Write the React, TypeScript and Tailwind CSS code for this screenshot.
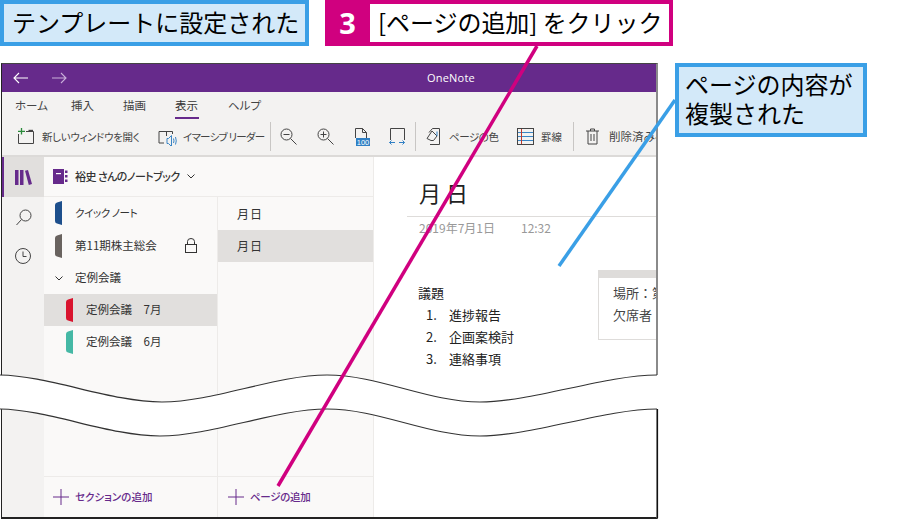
import React from "react";

const font = { fontFamily: '"Noto Sans CJK JP", "Noto Sans", sans-serif' };

function Tab({ color }: { color: string }) {
  return (
    <svg width="8" height="24" viewBox="0 0 8 24" className="shrink-0">
      <path d="M7 0 V24 L2 22.5 Q0 22 0 20 V4 Q0 2 2 1.5 Z" fill={color} />
    </svg>
  );
}

function Stroke({ w, h, children, className }: { w: number; h: number; children: React.ReactNode; className?: string }) {
  return (
    <svg width={w} height={h} viewBox={`0 0 ${w} ${h}`} fill="none" stroke="#444" strokeWidth="1" className={"shrink-0 " + (className || "")}>
      {children}
    </svg>
  );
}

function Divider({ cls }: { cls: string }) {
  return <div className={"w-px h-[29px] bg-[#c8c6c4] shrink-0 " + cls} />;
}

function Section({ color, label, selected, extra }: { color: string; label: string; selected?: boolean; extra?: React.ReactNode }) {
  return (
    <div className={"h-[32px] flex items-center pl-[22px] " + (selected ? "bg-[#e1dfdd]" : "")}>
      <Tab color={color} />
      <span className="ml-[12px] text-[11.5px] text-[#333]">{label}</span>
      {extra}
    </div>
  );
}

export default function App() {
  return (
    <div className="relative w-[902px] h-[520px] bg-white overflow-hidden" style={font}>
      {/* callouts */}
      <div className="flex h-[46px] items-stretch">
        <div className="w-[309px] border-[4px] border-[#3a9fe6] bg-[#d3e9f9] flex items-center pl-[8px] pb-[3px] text-[24px] text-black whitespace-nowrap">
          テンプレートに設定された
        </div>
        <div className="ml-[16px] w-[348px] bg-[#d0007f] flex items-stretch pt-[4px] pb-[4px] pr-[4px]">
          <div className="w-[45px] flex items-center justify-center text-white font-bold text-[29px]" style={{ fontFamily: '"Noto Sans", sans-serif' }}>3</div>
          <div className="flex-1 bg-white flex items-center pl-[8px] pb-[3px] text-[24px] text-black whitespace-nowrap tracking-[-0.05px]">
            [ページの追加] をクリック
          </div>
        </div>
      </div>

      {/* window */}
      <div className="mt-[17px] ml-px w-[657px] h-[456px] border-l border-t border-l-[#222] border-t-[#444] border-r-2 border-r-[#8a8a8a] border-b-2 border-b-[#222] flex flex-col overflow-hidden">
        <div className="h-[28px] shrink-0 bg-[#662a8b] flex items-center text-white">
          <svg width="15" height="12" viewBox="0 0 15 12" fill="none" stroke="#fff" strokeWidth="1.1" className="ml-[11px]"><path d="M15 6H1M6 1 1 6l5 5" /></svg>
          <svg width="15" height="12" viewBox="0 0 15 12" fill="none" stroke="#c9afd9" strokeWidth="1.1" className="ml-[24px]"><path d="M0 6h14M9 1l5 5-5 5" /></svg>
          <span className="ml-[360px] text-[11px] tracking-[0.2px]" style={{ fontFamily: '"Open Sans", sans-serif' }}>OneNote</span>
        </div>
        <div className="h-[65px] shrink-0 bg-[#f3f2f1] border-b-2 border-[#dcdad8] text-[#444] flex flex-col">
          <div className="h-[28px] flex text-[11.5px] pl-[13px] pt-[5px] [font-feature-settings:'palt']">
            <span className="w-[56px]">ホーム</span>
            <span className="w-[52px]">挿入</span>
            <span className="w-[52px]">描画</span>
            <span className="w-[53px] h-[22px] relative text-[#333]">
              表示
              <span className="absolute left-0 top-[20px] w-[24px] h-[2px] bg-[#662a8b]" />
            </span>
            <span>ヘルプ</span>
          </div>
          <div className="flex items-center h-[33px] pl-[15px] text-[10.5px] whitespace-nowrap [font-feature-settings:'palt']">
            <Stroke w={17} h={16} className="mt-[-1px]">
              <path d="M9 3.5H16.500V15.500H1.500V6" />
              <path d="M11.500 2.500H16" strokeWidth="1.400" />
              <path d="M4.500 0V6.500M1 3.300H8" stroke="#2a8a3a" strokeWidth="1.300" />
            </Stroke>
            <span className="ml-[8px] w-[98px] shrink-0 tracking-[-0.35px]">新しいウィンドウを開く</span>
            <Stroke w={19} h={18} className="ml-[18px]">
              <path d="M8 3.500H1V15H6" />
              <path d="M8.500 3.500H14.500V6" />
              <path d="M8.500 3V8" />
              <path d="M9 10.500h1.500l3-3v11l-3-3H9z" stroke="#3a85c5" />
              <path d="M15.500 10.500q1 2.500 0 4.500M17.500 9q1.500 4 0 7.500" stroke="#3a85c5" />
            </Stroke>
            <span className="ml-[6px] w-[78px] shrink-0 tracking-[-0.75px]">イマーシブ リーダー</span>
            <Divider cls="ml-[9px]" />
            <Stroke w={18} h={18} className="ml-[9px]">
              <circle cx="6.500" cy="6.500" r="5.500" /><path d="M10.500 10.500l6 6M3.500 6.500h6" />
            </Stroke>
            <Stroke w={18} h={18} className="ml-[19px]">
              <circle cx="6.500" cy="6.500" r="5.500" /><path d="M10.500 10.500l6 6M3.500 6.500h6M6.500 3.500v6" />
            </Stroke>
            <Stroke w={16} h={18} className="ml-[19px]">
              <path d="M1.500 10V0.500H8.500L12.500 4.500V10M8.500 0.500V4.500H12.500" />
              <rect x="2" y="10" width="14" height="8" fill="#2f7fc4" stroke="none" />
              <text x="9" y="16.500" fontSize="7.500" fill="#fff" stroke="none" textAnchor="middle" fontFamily="Liberation Sans">100</text>
            </Stroke>
            <Stroke w={17} h={18} className="ml-[19px]">
              <path d="M1.500 12V0.500H15.500V12" />
              <path d="M0.500 14.500H6M10 14.500H15.500M2.500 12.500l-2 2 2 2M13.500 12.500l2 2-2 2" stroke="#2f7fc4" />
            </Stroke>
            <Divider cls="ml-[9px]" />
            <Stroke w={16} h={18} className="ml-[10px]">
              <path d="M3 4.500L6.500 0.500H13.500V16.500H4" />
              <path d="M1 10.500L6 3l5 5-3.500 4.500H5z" />
              <path d="M11 3.500V8" stroke="#2f7fc4" />
            </Stroke>
            <span className="ml-[7px] w-[50px] shrink-0 tracking-[-0.45px]">ページの色</span>
            <Stroke w={17} h={17} className="ml-[18px]">
              <rect x="0.500" y="0.500" width="16" height="16" />
              <path d="M1 4.500H16M1 8.500H16M1 12.500H16" stroke="#3a85c5" />
              <path d="M4.500 1V16" stroke="#c0392b" />
            </Stroke>
            <span className="ml-[7px] w-[25px] shrink-0">罫線</span>
            <Divider cls="ml-[7px]" />
            <Stroke w={13} h={17} className="ml-[12px]">
              <path d="M0 3H13M2 3V16H11V3M4.500 3V1H8.500V3M5 6V13M8 6V13" />
            </Stroke>
            <span className="ml-[10px] shrink-0 text-[11.500px]">削除済みページ</span>
          </div>
        </div>

        <div className="flex-1 flex min-h-0 bg-white">
          {/* rail */}
          <div className="w-[42px] shrink-0 bg-[#f3f2f1] flex flex-col items-center">
            <div className="w-full h-[40px] bg-[#e1dfdd] border-l-2 border-[#662a8b] flex items-center justify-center pr-[2px]">
              <svg width="17" height="15" viewBox="0 0 17 15" fill="#662a8b">
                <rect x="0" y="0" width="3.500" height="15" /><rect x="5" y="0" width="3.500" height="15" />
                <path d="M10 0.800 13 0 17 14 13.800 15z" />
              </svg>
            </div>
            <Stroke w={16} h={17} className="mt-[12px] ml-[1px]">
              <circle cx="9.500" cy="6.500" r="5.500" /><path d="M5.500 10.500 0.500 16" />
            </Stroke>
            <svg width="16" height="16" viewBox="0 0 16 16" fill="none" stroke="#444" className="mt-[22px]">
              <circle cx="8" cy="8" r="7.500" /><path d="M8 3.500V8.500H11.500" />
            </svg>
          </div>

          {/* sections + pages */}
          <div className="w-[330px] shrink-0 bg-[#faf9f8] border-r border-[#edebe9] flex flex-col text-[#333]">
            <div className="h-[40px] shrink-0 border-b border-[#edebe9] flex items-center pl-[9px]">
              <svg width="15" height="15" viewBox="0 0 15 15" className="shrink-0">
                <rect width="11" height="15" fill="#662a8b" />
                <rect x="3" y="4" width="5" height="1.200" fill="#fff" />
                <rect x="12" y="1.500" width="2.500" height="2.500" fill="#662a8b" />
                <rect x="12" y="6" width="2.500" height="2.500" fill="#662a8b" />
                <rect x="12" y="10.500" width="2.500" height="2.500" fill="#662a8b" />
              </svg>
              <span className="ml-[7px] text-[11px] font-medium tracking-[-0.55px] [font-feature-settings:'palt']">裕史 さんのノートブック</span>
              <svg width="8" height="5" viewBox="0 0 8 5" fill="none" stroke="#333" className="ml-[7px]"><path d="M0.500 0.500 4 4 7.500 0.500" /></svg>
            </div>
            <div className="flex-1 flex min-h-0">
              <div className="w-[174px] border-r border-[#edebe9] flex flex-col">
                <div className="flex-1 text-[11.500px]">
                  <div className="h-[32px] flex items-center pl-[11px]">
                    <Tab color="#1d4f8c" />
                    <span className="ml-[12px] text-[10.500px] tracking-[-0.4px] [font-feature-settings:'palt']">クイック ノート</span>
                  </div>
                  <div className="h-[33px] flex items-center pl-[11px]">
                    <Tab color="#69635f" />
                    <span className="ml-[12px]">第11期株主総会</span>
                    <svg width="12" height="15" viewBox="0 0 12 15" fill="none" stroke="#333" className="ml-[28px]">
                      <rect x="0.500" y="6.500" width="11" height="8" /><path d="M2.500 6.500V3.500a3.500 3 0 0 1 7 0V6.500" />
                    </svg>
                  </div>
                  <div className="h-[32px] flex items-center pl-[11px]">
                    <svg width="8" height="5" viewBox="0 0 8 5" fill="none" stroke="#333"><path d="M0.500 0.500 4 4 7.500 0.500" /></svg>
                    <span className="ml-[12px]">定例会議</span>
                  </div>
                  <Section color="#d9142e" label="定例会議　7月" selected />
                  <Section color="#45b8a5" label="定例会議　6月" />
                </div>
                <div className="h-[41px] shrink-0 border-t border-[#edebe9] flex items-center pl-[9px] text-[#662a8b] text-[10.500px] font-medium [font-feature-settings:'palt']">
                  <svg width="16" height="16" viewBox="0 0 16 16" stroke="#662a8b"><path d="M0 8H16M8 0V16" /></svg>
                  <span className="ml-[6px]">セクションの追加</span>
                </div>
              </div>
              <div className="flex-1 flex flex-col">
                <div className="flex-1 text-[12px]">
                  <div className="h-[33px] flex items-center pl-[19px] tracking-[1px]">月日</div>
                  <div className="h-[32px] flex items-center pl-[19px] bg-[#e1dfdd] tracking-[1px]">月日</div>
                </div>
                <div className="h-[41px] shrink-0 border-t border-[#edebe9] flex items-center pl-[10px] text-[#662a8b] text-[10.500px] font-medium tracking-[-0.3px] [font-feature-settings:'palt']">
                  <svg width="16" height="16" viewBox="0 0 16 16" stroke="#662a8b"><path d="M0 8H16M8 0V16" /></svg>
                  <span className="ml-[6px]">ページの追加</span>
                </div>
              </div>
            </div>
          </div>

          {/* page */}
          <div className="flex-1 min-w-0 overflow-hidden pl-[33px] text-[#333]">
            <div className="h-[60px] border-b border-[#dedcda] pl-[12px] pt-[17px] text-[22px] leading-[36px] text-[#222] tracking-[5px]">月日</div>
            <div className="mt-[2px] pl-[12px] text-[12px] text-[#999] whitespace-nowrap leading-[18px]">
              2019年7月1日<span className="ml-[26px]">12:32</span>
            </div>
            <div className="mt-[33px] flex">
              <div className="w-[191px] shrink-0 pl-[11px] pt-[12px] text-[13px] leading-[22px] text-[#222]">
                <div className="h-[22px]">議題</div>
                <div className="flex pl-[8px]"><span className="w-[23px]">1.</span>進捗報告</div>
                <div className="flex pl-[8px]"><span className="w-[23px]">2.</span>企画案検討</div>
                <div className="flex pl-[8px]"><span className="w-[23px]">3.</span>連絡事項</div>
              </div>
              <div className="flex-1 h-[70px] border-l border-b border-[#dedcda] whitespace-nowrap overflow-hidden">
                <div className="h-[8px] bg-[#dedcda]" />
                <div className="pl-[14px] pt-[4px] text-[13px] leading-[22px] text-[#444]">
                  <div>場所：第</div>
                  <div>欠席者</div>
                </div>
              </div>
            </div>
          </div>
        </div>
      </div>

      {/* torn band and leader lines */}
      <svg width="902" height="520" viewBox="0 0 902 520" className="absolute left-0 top-0 pointer-events-none" fill="none">
        <path d="M-2 375 C 48 375 110 402 162 402 S 275 375 327 375 S 428 402 480 402 S 605 375 657 375 H660 V409 H657 C 605 409 532 436 480 436 S 379 409 327 409 S 212 436 160 436 S 48 409 -2 409 Z" fill="#fff" stroke="none" />
        <path d="M-2 375 C 48 375 110 402 162 402 S 275 375 327 375 S 428 402 480 402 S 605 375 657 375" stroke="#333" strokeWidth="1.200" />
        <path d="M-2 409 C 48 409 108 436 160 436 S 275 409 327 409 S 428 436 480 436 S 605 409 657 409" stroke="#333" strokeWidth="1.200" />
        <path d="M657.500 409V518" stroke="#111" strokeWidth="1.200" />
        <path d="M537 46 278 486" stroke="#d0007f" strokeWidth="3.500" />
        <path d="M675 100 559 266" stroke="#3a9fe6" strokeWidth="3.500" />
      </svg>

      {/* third callout */}
      <div className="absolute left-[675px] top-[63px] w-[192px] h-[74px] border-[4px] border-[#3a9fe6] bg-[#d3e9f9] pl-[6px] pt-[2px] text-[24px] leading-[29px] text-black">
        ページの内容が<br />複製された
      </div>
    </div>
  );
}
